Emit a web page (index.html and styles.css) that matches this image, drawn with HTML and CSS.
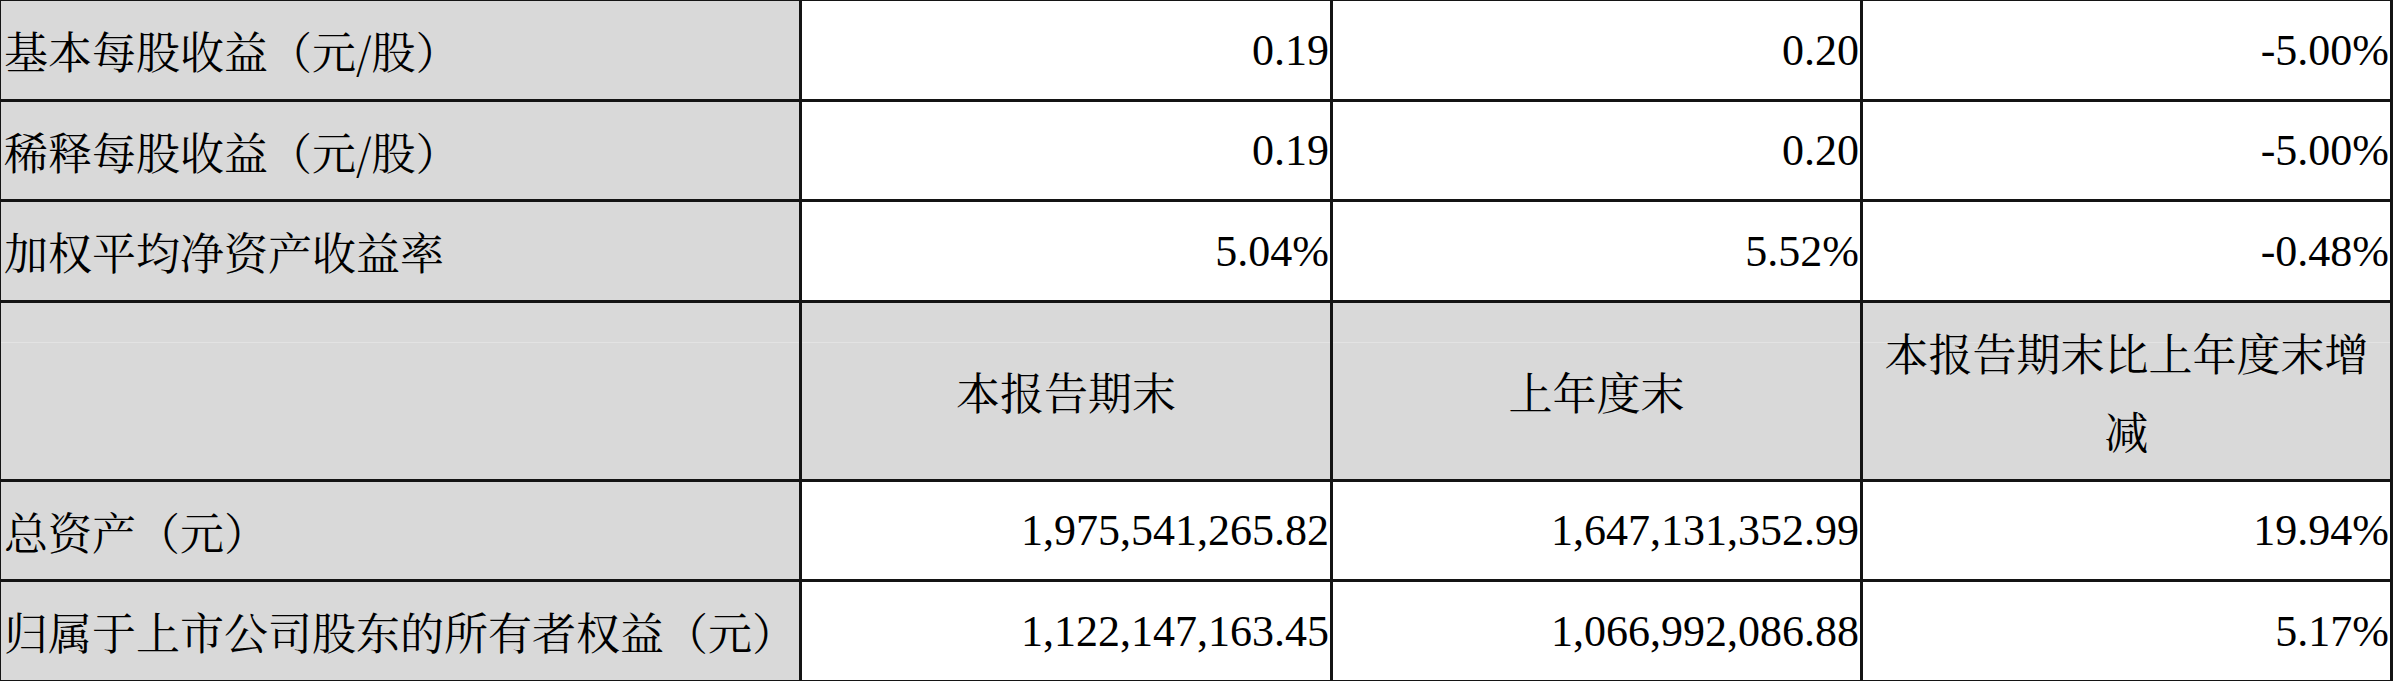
FILE: index.html
```html
<!DOCTYPE html>
<html lang="zh-CN">
<head>
<meta charset="utf-8">
<title>主要财务数据</title>
<link rel="stylesheet" href="styles.css">
</head>
<body>
<div class="sheet">
  <div class="cell label">基本每股收益（元/股）</div>
  <div class="cell num">0.19</div>
  <div class="cell num">0.20</div>
  <div class="cell num">-5.00%</div>

  <div class="cell label">稀释每股收益（元/股）</div>
  <div class="cell num">0.19</div>
  <div class="cell num">0.20</div>
  <div class="cell num">-5.00%</div>

  <div class="cell label">加权平均净资产收益率</div>
  <div class="cell num">5.04%</div>
  <div class="cell num">5.52%</div>
  <div class="cell num">-0.48%</div>

  <div class="cell label head"></div>
  <div class="cell head">本报告期末</div>
  <div class="cell head">上年度末</div>
  <div class="cell head">本报告期末比上年度末增减</div>

  <div class="cell label">总资产（元）</div>
  <div class="cell num">1,975,541,265.82</div>
  <div class="cell num">1,647,131,352.99</div>
  <div class="cell num">19.94%</div>

  <div class="cell label">归属于上市公司股东的所有者权益（元）</div>
  <div class="cell num">1,122,147,163.45</div>
  <div class="cell num">1,066,992,086.88</div>
  <div class="cell num">5.17%</div>
</div>
</body>
</html>
```

FILE: styles.css
```css
html, body {
  margin: 0;
  padding: 0;
  background: #ffffff;
  overflow: hidden;
}

.sheet {
  display: grid;
  grid-template-columns: 798px 528px 527px 527px;
  grid-template-rows: 98px 97px 98px 176px 97px 98px;
  gap: 3px;
  padding: 3px;
  margin: -2px 0 0 -2px;
  width: max-content;
  background: #141414;
  font-size: 44px;
  color: #000000;
}

.cell {
  background: #ffffff;
  display: flex;
  align-items: center;
  white-space: nowrap;
  overflow: hidden;
}

.label {
  background: #d9d9d9;
  padding-left: 3px;
  font-family: "Noto Serif CJK SC", "Noto Sans CJK SC", sans-serif;
}

.num {
  justify-content: flex-end;
  padding-right: 1px;
  font-family: "Liberation Serif", "Times New Roman", Tinos, "DejaVu Serif", serif;
}

.head {
  background: linear-gradient(#d9d9d9 39px, #e3e3e3 39px, #e3e3e3 40px, #d9d9d9 40px);
  justify-content: center;
  text-align: center;
  white-space: normal;
  line-height: 78px;
  font-family: "Noto Serif CJK SC", "Noto Sans CJK SC", sans-serif;
  padding: 0 8px;
}
```
